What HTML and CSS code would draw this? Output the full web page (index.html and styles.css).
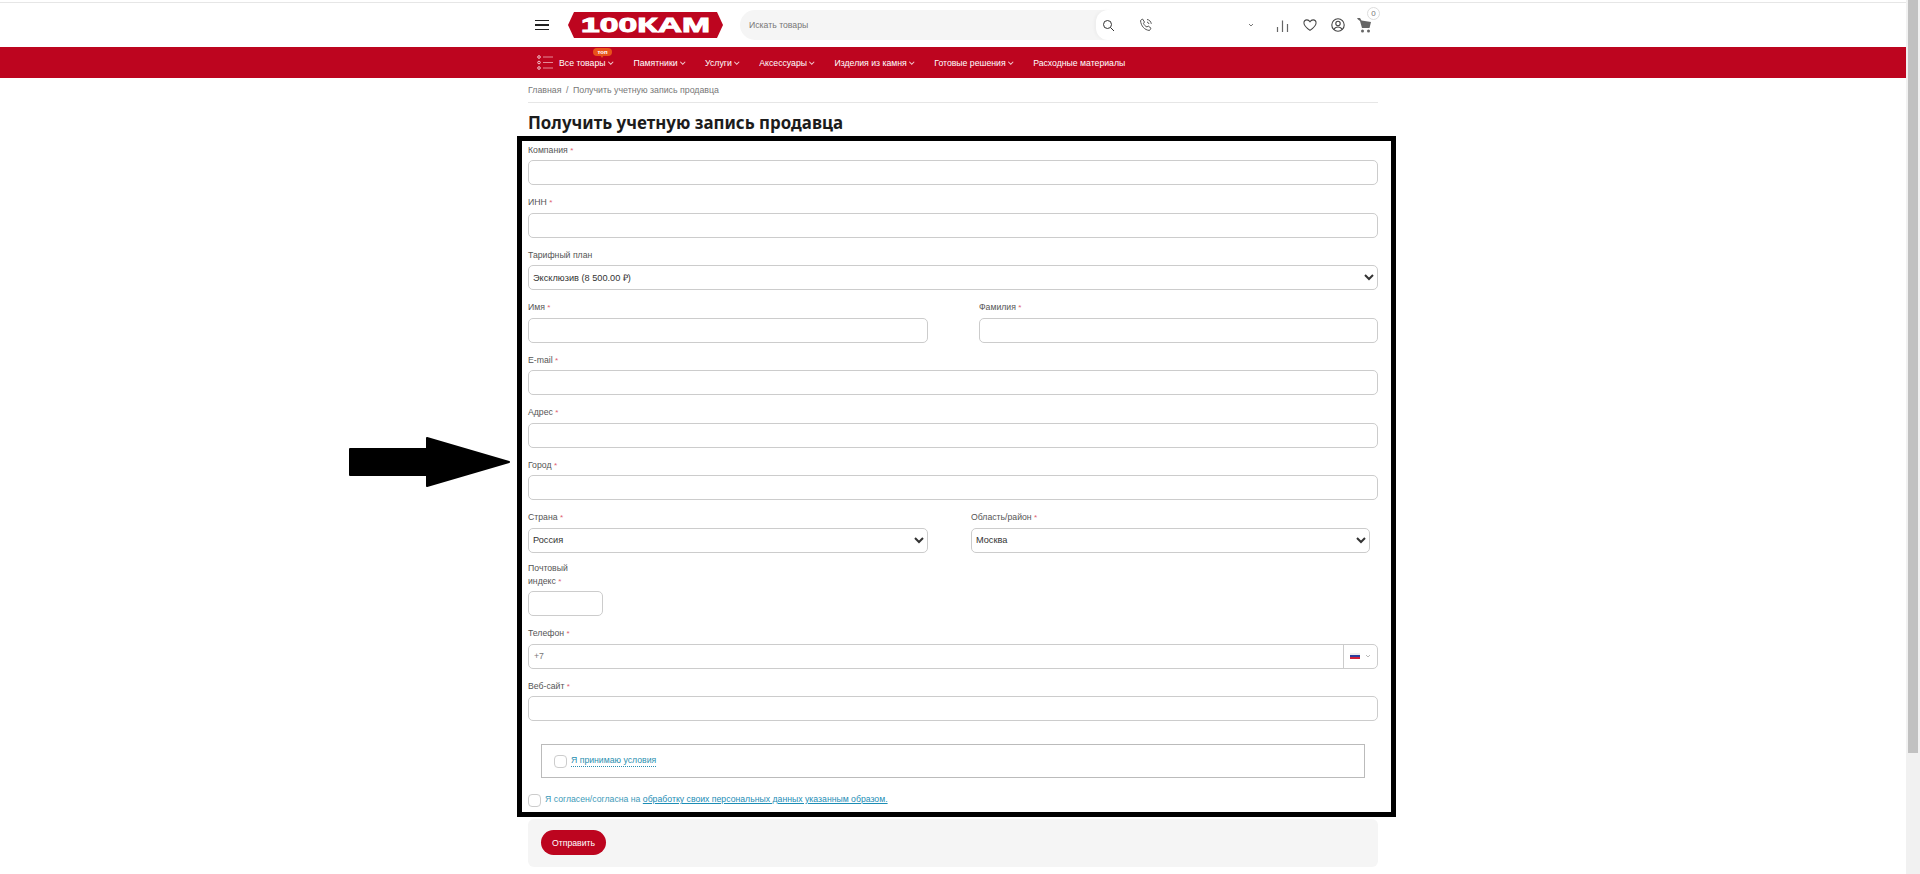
FILE: index.html
```html
<!DOCTYPE html>
<html lang="ru">
<head>
<meta charset="utf-8">
<title>Получить учетную запись продавца</title>
<link rel="stylesheet" href="styles.css">
</head>
<body>
<div class="page">
  <div class="topline"></div>
  <header class="header">
    <div class="wrap header-row">
      <button class="burger" aria-label="Меню"><span></span><span></span><span></span></button>
      <a class="logo" href="#">
        <svg width="155" height="26" viewBox="0 0 155 26"><polygon points="6,0 149,0 155,13 149,26 6,26 0,13" fill="#bd051f"/><text x="13" y="20" textLength="129" lengthAdjust="spacingAndGlyphs" font-family="Liberation Sans, sans-serif" font-weight="700" font-size="19.5" fill="#fff" stroke="#fff" stroke-width=".9">100КАМ</text></svg>
      </a>
      <div class="search">
        <span class="search-text">Искать товары</span>
        <span class="search-btn">
          <svg width="13" height="13" viewBox="0 0 13 13" fill="none" stroke="#333" stroke-width="1"><circle cx="5.500" cy="5.500" r="4"/><path d="M8.500 8.500l3.500 3.500"/></svg>
        </span>
      </div>
      <svg class="phone" width="14" height="14" viewBox="0 0 14 14" fill="none" stroke="#555" stroke-width="1"><path d="M1.500 2.500l2-1.500 2 3-1 1.300c.6 1.700 1.700 2.900 3.500 3.700l1.200-1 2.800 2.200-1.500 2.300c-5-.5-8.500-4.500-9-10z"/><path d="M8 1.500c2.200.2 4 2 4.300 4.300M8 4c1 .2 1.800 1 2 2"/></svg>
      <svg class="mini-chevron" width="6" height="4" viewBox="0 0 6 4" fill="none" stroke="#777" stroke-width="1"><path d="M1 1l2 2 2-2"/></svg>
      <div class="tools">
        <svg width="13" height="13" viewBox="0 0 13 13" fill="none" stroke="#666" stroke-width="1.200"><path d="M1.500 13V8M6.500 13V1.500M11.500 13V5"/></svg>
        <svg width="14" height="14" viewBox="0 0 15 14" fill="none" stroke="#444" stroke-width="1.100"><path d="M7.500 12.800C3 9.500 1 7.500 1 4.800 1 2.800 2.500 1.500 4.200 1.500c1.400 0 2.500.7 3.300 2 .8-1.300 1.900-2 3.300-2 1.700 0 3.200 1.300 3.200 3.300 0 2.700-2 4.700-6.500 8z"/></svg>
        <svg width="14" height="14" viewBox="0 0 14 14" fill="none" stroke="#444" stroke-width="1.100"><circle cx="7" cy="7" r="6.200"/><circle cx="7" cy="5.500" r="2.200"/><path d="M3 11.500c.8-1.800 2.300-2.500 4-2.500s3.200.7 4 2.500"/></svg>
        <span class="cart">
          <svg width="16" height="15" viewBox="0 0 16 15" fill="#666"><path d="M0 0h3l1.500 2.500L14 4l-1.500 6H5L3 3 1 1.500z"/><circle cx="5.500" cy="13" r="1.500"/><circle cx="11.500" cy="13" r="1.500"/></svg>
          <span class="cart-badge">0</span>
        </span>
      </div>
    </div>
  </header>
  <nav class="nav">
    <div class="wrap nav-row">
      <svg class="nav-icon" width="16" height="15" viewBox="0 0 16 15" fill="none" stroke="#f3c9cf" stroke-width="1"><circle cx="2" cy="2" r="1.300"/><circle cx="2" cy="7.500" r="1.300"/><circle cx="2" cy="13" r="1.300"/><path d="M6 2h10M6 7.500h10M6 13h10" stroke="#e58b98"/></svg>
      <a class="nav-item nav-first" href="#">Все товары<i class="chev"></i><span class="badge">топ</span></a>
      <a class="nav-item" href="#">Памятники<i class="chev"></i></a>
      <a class="nav-item" href="#">Услуги<i class="chev"></i></a>
      <a class="nav-item" href="#">Аксессуары<i class="chev"></i></a>
      <a class="nav-item" href="#">Изделия из камня<i class="chev"></i></a>
      <a class="nav-item" href="#">Готовые решения<i class="chev"></i></a>
      <a class="nav-item" href="#">Расходные материалы</a>
    </div>
  </nav>
  <main class="wrap">
    <div class="crumbs"><a href="#">Главная</a><span class="sep">/</span><span>Получить учетную запись продавца</span></div>
    <h1 class="title">Получить учетную запись продавца</h1>
    <form class="form">
      <div class="field"><label>Компания <b>*</b></label><input type="text"></div>
      <div class="field"><label>ИНН <b>*</b></label><input type="text"></div>
      <div class="field"><label>Тарифный план</label><select><option>Эксклюзив (8 500.00 ₽)</option></select></div>
      <div class="split split-name">
        <div class="field"><label>Имя <b>*</b></label><input type="text"></div>
        <div class="field"><label>Фамилия <b>*</b></label><input type="text"></div>
      </div>
      <div class="field"><label>E-mail <b>*</b></label><input type="text"></div>
      <div class="field"><label>Адрес <b>*</b></label><input type="text"></div>
      <div class="field"><label>Город <b>*</b></label><input type="text"></div>
      <div class="split split-place">
        <div class="field"><label>Страна <b>*</b></label><select><option>Россия</option></select></div>
        <div class="field"><label>Область/район <b>*</b></label><select><option>Москва</option></select></div>
      </div>
      <div class="field field-postal"><label>Почтовый<br>индекс <b>*</b></label><input type="text"></div>
      <div class="field"><label>Телефон <b>*</b></label>
        <div class="tel"><span class="tel-code">+7</span>
          <span class="tel-flag"><span class="flag"><i></i><i></i><i></i></span><svg width="6" height="4" viewBox="0 0 6 4" fill="none" stroke="#aaa" stroke-width=".8"><path d="M1 1l2 2 2-2"/></svg></span>
        </div>
      </div>
      <div class="field"><label>Веб-сайт <b>*</b></label><input type="text"></div>
      <div class="terms"><span class="check"></span><a class="link-dotted" href="#">Я принимаю условия</a></div>
      <div class="consent"><span class="check"></span><span>Я согласен/согласна на <a class="link-under" href="#">обработку своих персональных данных указанным образом.</a></span></div>
    </form>
    <div class="actions"><button class="submit" type="button">Отправить</button></div>
  </main>
</div>
<div class="scrollbar"><div class="scroll-thumb"></div></div>
<div class="marker-box"></div>
<svg class="marker-arrow" width="161" height="50" viewBox="0 0 161 50"><polygon points="1,12 78,12 78,1 160,25 78,49 78,38 1,38" fill="#000" stroke="#000" stroke-width="2" stroke-linejoin="round"/></svg>
</body>
</html>
```
FILE: styles.css
```css
* { box-sizing: border-box; }
html, body { margin: 0; padding: 0; background: #fff; }
body { font-family: "Liberation Sans", Arial, sans-serif; font-size: 8.700px; color: #444; overflow: hidden; height: 874px; }
a { text-decoration: none; color: inherit; }
.page { width: 1906px; }
.wrap { width: 850px; margin: 0 auto; }
.topline { height: 3px; border-bottom: 1px solid #e6e6e6; }
.header { height: 44px; }
.header-row { display: flex; align-items: center; height: 100%; position: relative; }
.burger { width: 14px; height: 10px; margin-left: 7px; padding: 0; border: 0; background: none; display: flex; flex-direction: column; justify-content: space-between; }
.burger span { display: block; height: 1.200px; background: #222; }
.logo { display: block; height: 26px; margin-left: 19px; }
.logo svg { display: block; }
.search { width: 380px; height: 30px; margin-left: 17px; background: #f5f5f5; border-radius: 15px; display: flex; align-items: center; justify-content: space-between; padding-left: 9px; }
.search-text { color: #777; font-size: 8.700px; }
.search-btn { width: 24px; height: 30px; border-radius: 15px; background: #fff; display: flex; align-items: center; justify-content: center; box-shadow: -2px 0 3px rgba(0,0,0,.03); }
.phone { margin-left: 19px; }
.mini-chevron { margin-left: 95px; }
.tools { display: flex; align-items: center; margin-left: 22px; gap: 14px; }
.cart { position: relative; display: block; height: 15px; margin-left: -2px; }
.cart-badge { position: absolute; left: 10px; top: -11px; width: 13px; height: 13px; border-radius: 50%; border: 1px solid #ddd; background: #fff; font-size: 8px; line-height: 11px; text-align: center; color: #777; }
.nav { background: #bd051f; height: 31px; }
.nav-row { display: flex; align-items: center; height: 100%; padding-left: 9px; }
.nav-icon { margin-right: 6px; }
.nav-item { position: relative; display: flex; align-items: center; color: #fff; font-size: 8.700px; margin-right: 20px; white-space: nowrap; }
.nav-first { margin-right: 20.500px; }
.chev { display: block; width: 3.500px; height: 3.500px; border-right: 1px solid rgba(255,255,255,.8); border-bottom: 1px solid rgba(255,255,255,.8); transform: rotate(45deg); margin: -2px 1px 0 3px; }
.badge { position: absolute; left: 34px; top: -10px; width: 19px; height: 8px; border-radius: 4px; background: #e8531a; color: #fff; font-size: 6px; font-weight: 700; line-height: 8px; text-align: center; }
.badge::after { content: ""; position: absolute; left: 7px; top: 7px; border: 2px solid transparent; border-top: 3px solid #e8531a; }
.crumbs { height: 25px; display: flex; align-items: center; border-bottom: 1px solid #e6e6e6; color: #777; font-size: 8.800px; line-height: 24px; }
.sep { margin: 0 4.500px; }
.title { margin: 10px 0 0; font-family: "Noto Sans", sans-serif; font-weight: 700; font-size: 16.900px; line-height: 20px; color: #1c1c1c; }
.form { margin-top: 7px; padding-top: 3.500px; }
.field { margin-bottom: 11px; }
.field label { display: block; line-height: 13px; margin-bottom: 3.500px; color: #555; font-size: 8.700px; }
.field label b { color: #e0606e; font-weight: 400; font-size: 8px; line-height: 0; }
.field input, .field select, .tel { display: block; width: 100%; height: 25px; border: 1px solid #ccc; border-radius: 5px; background: #fff; font-family: inherit; font-size: 8.700px; color: #333; }
.field select { font-size: 9.200px; }
.split { display: grid; }
.split-name { grid-template-columns: 400px 399px; column-gap: 51px; }
.split-place { grid-template-columns: 400px 399px; column-gap: 43px; }
.field-postal { margin-top: -2px; }
.field-postal input { width: 75px; }
.tel { display: flex; align-items: center; justify-content: space-between; padding-left: 5px; color: #777; }
.tel-flag { width: 34px; height: 100%; border-left: 1px solid #ccc; display: flex; align-items: center; gap: 5px; padding-left: 6px; }
.flag { display: block; width: 10px; height: 7px; }
.flag i { display: block; height: 2.330px; }
.flag i:nth-child(1) { background: #eee; }
.flag i:nth-child(2) { background: #2a3f9e; }
.flag i:nth-child(3) { background: #d0203a; }
.terms { margin: 23px 13px 0; height: 34px; border: 1px solid #bbb; display: flex; align-items: center; padding-left: 12px; gap: 4px; }
.check { display: block; flex: none; width: 13px; height: 13px; border: 1px solid #ccc; border-radius: 4px; background: #fff; }
.link-dotted { color: #2a8fb0; border-bottom: 1px dotted #2a8fb0; font-size: 8.700px; line-height: 11px; }
.consent { margin-top: 16px; display: flex; align-items: flex-start; gap: 4px; font-size: 8.700px; line-height: 11px; color: #3d9ab8; }
.link-under { color: #1c8db5; text-decoration: underline; }
.actions { margin-top: 12px; height: 48px; background: #f5f5f5; border-radius: 6px; padding: 11px 13px; }
.submit { display: block; width: 65px; height: 25px; border: 0; border-radius: 13px; background: #bd051f; color: #fff; font-family: inherit; font-size: 8.700px; padding: 0; }
.scrollbar { position: fixed; top: 0; right: 0; width: 14px; height: 874px; background: #f1f1f1; }
.scroll-thumb { height: 753px; margin: 0 2px; background: #c1c1c1; }
.marker-box { position: absolute; left: 517px; top: 136px; width: 879px; height: 681px; border: 5px solid #000; pointer-events: none; }
.marker-arrow { position: absolute; left: 349px; top: 437px; pointer-events: none; }
```
